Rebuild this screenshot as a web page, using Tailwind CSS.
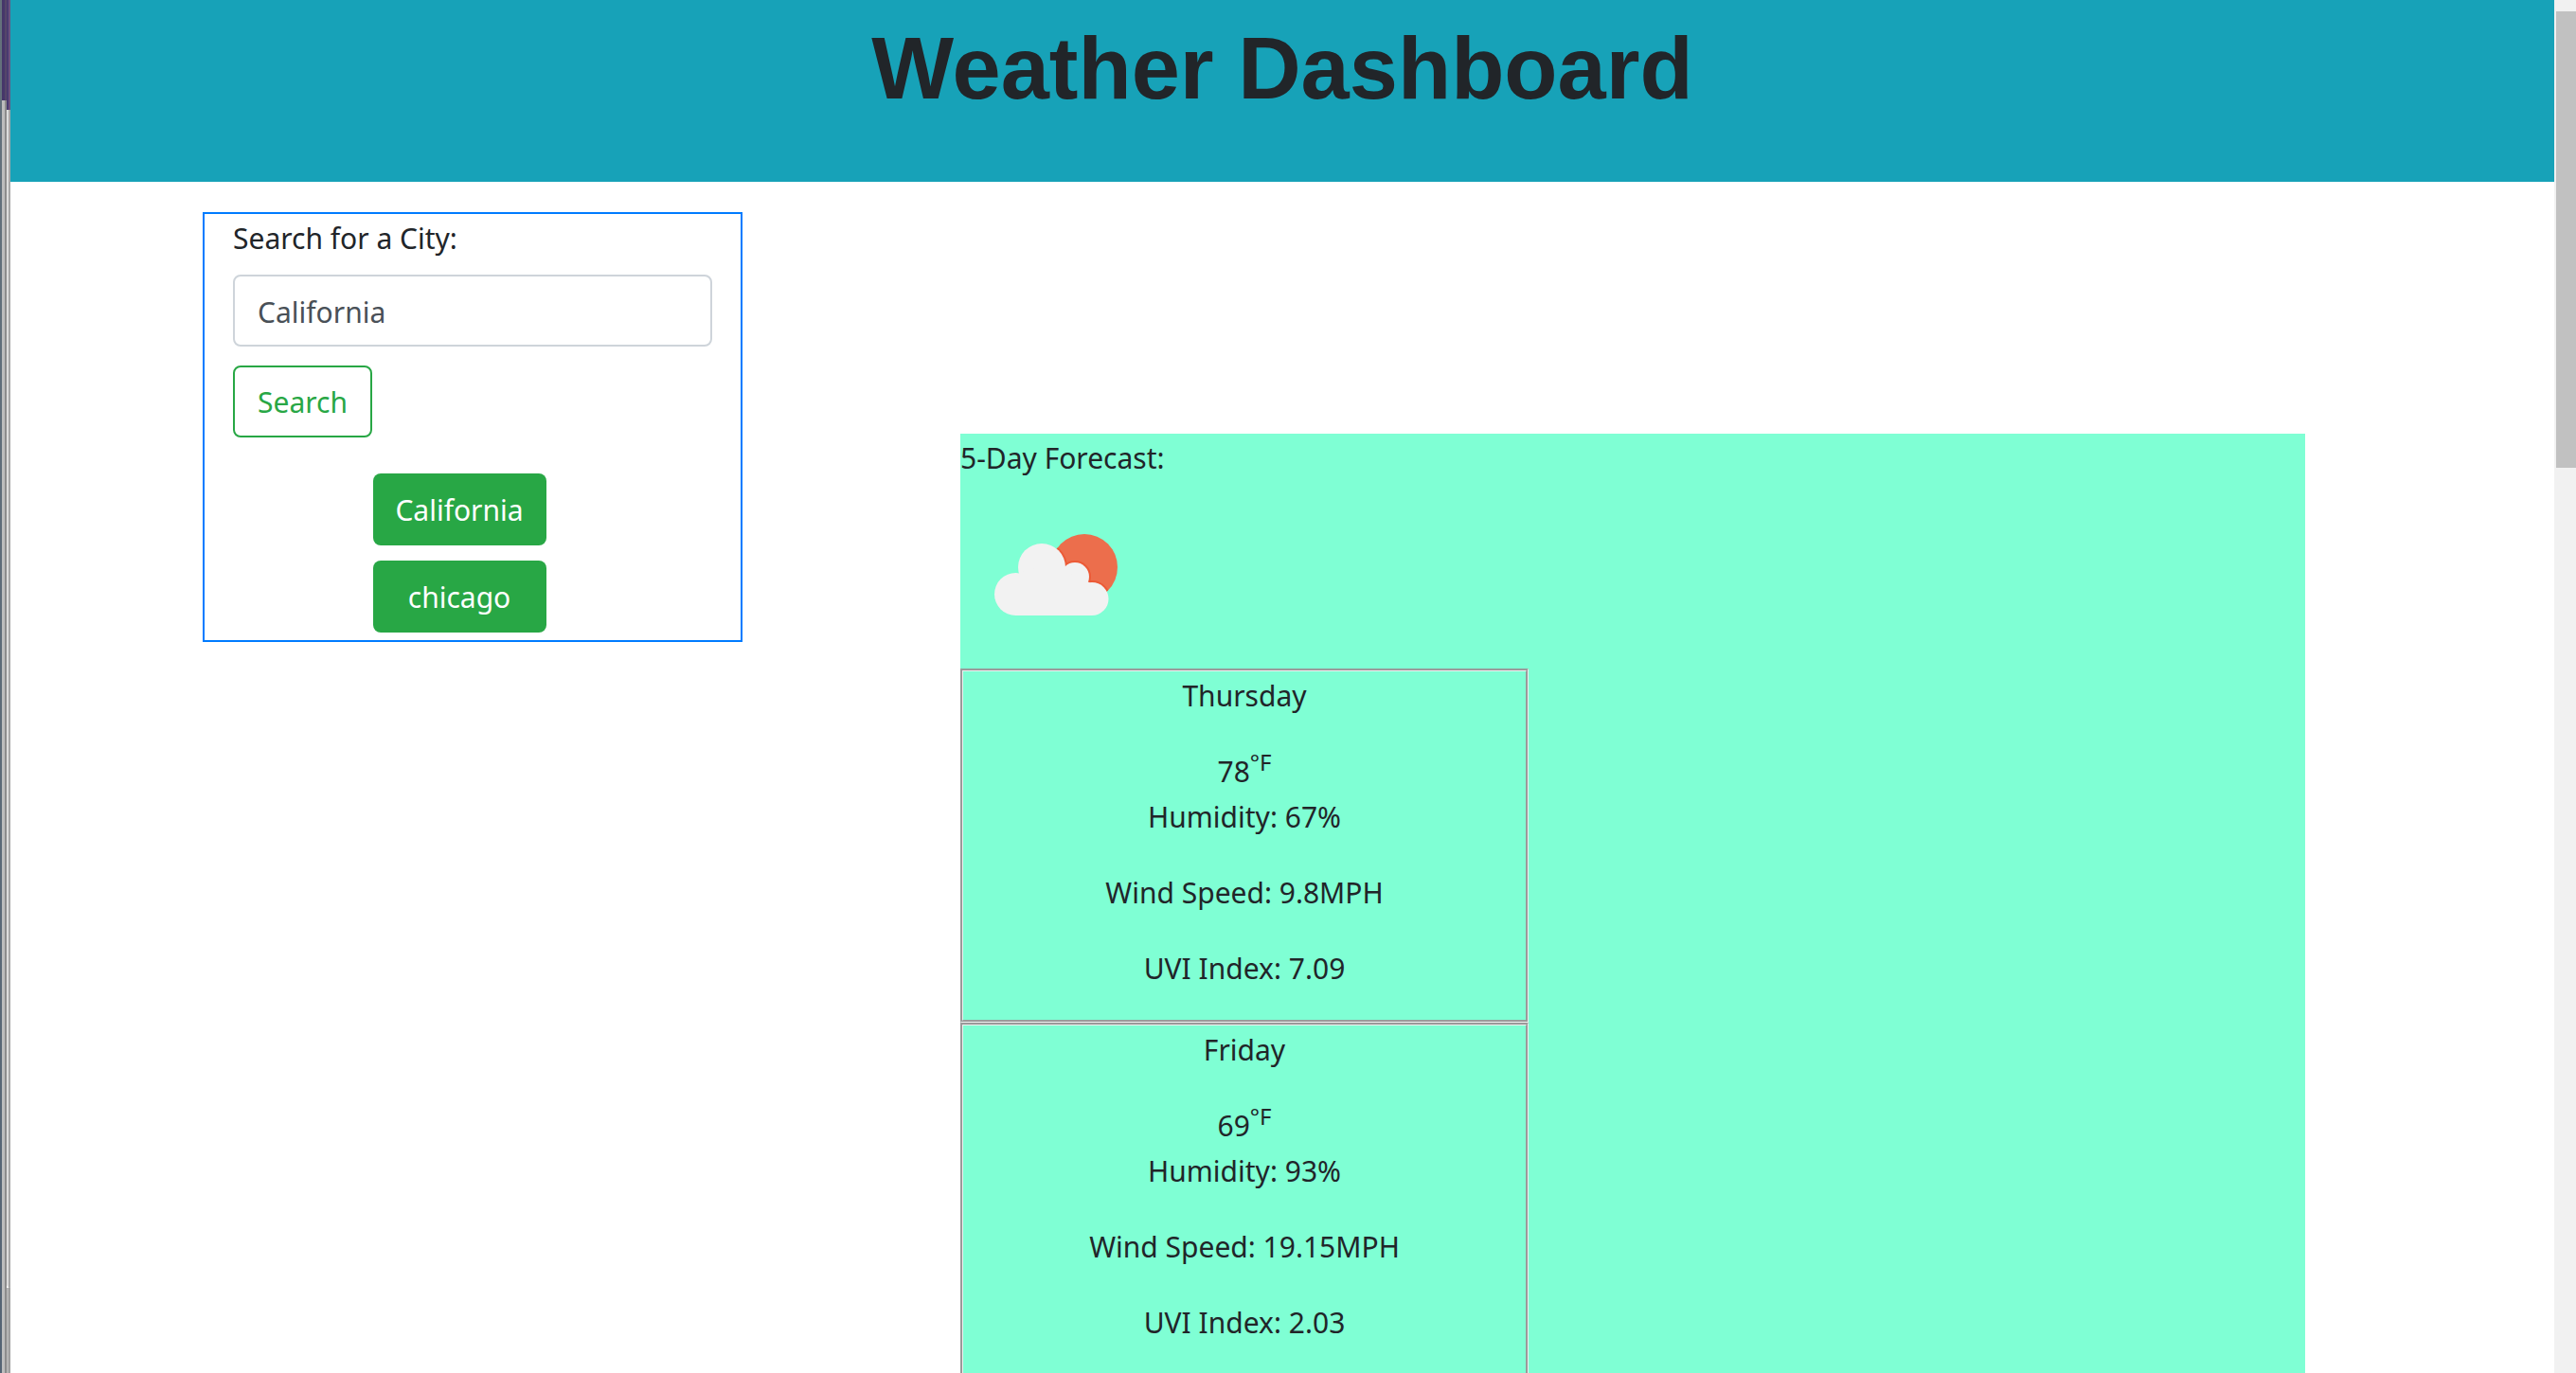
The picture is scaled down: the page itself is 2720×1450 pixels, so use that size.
<!DOCTYPE html>
<html lang="en">
<head>
<meta charset="utf-8">
<title>Weather Dashboard</title>
<script src="https://cdn.jsdelivr.net/npm/@tailwindcss/browser@4"></script>
</head>
<body class="flex h-screen overflow-hidden bg-white font-['Noto_Sans',sans-serif] text-[30px] leading-[48px] text-[#212529]">
  <!-- window edge -->
  <div class="flex w-[11px] shrink-0">
    <div class="w-[2px] bg-linear-to-b from-[#64727c] to-[#556474]"></div>
    <div class="flex w-[5px] flex-col">
      <div class="h-[106px] border-r-2 border-[#544669] bg-[#46366a]"></div>
      <div class="flex-1 border-r-2 border-[#8c8c8c] bg-[#bdbdbd]"></div>
    </div>
    <div class="flex w-[4px] flex-col">
      <div class="h-[116px] border-r-2 border-[#6a5480] bg-[#4a3a70]"></div>
      <div class="h-[1244px] rounded-bl-[4px] border-r-2 border-[#a8a8a8] bg-[#dcdcdc]"></div>
      <div class="flex-1 border-r-2 border-[#a0a0a0] bg-[#b4b4b4]"></div>
    </div>
  </div>

  <div class="min-w-0 flex-1">
    <header class="h-[192px] bg-[#17a2b8] pt-[18px] text-center">
      <h1 class="font-['Liberation_Sans',sans-serif] text-[92px] leading-[108px] font-bold">Weather Dashboard</h1>
    </header>

    <main class="mx-auto flex max-w-[2280px] items-start pt-8">
      <aside class="w-1/4 border-2 border-[#007bff] px-[30px] pt-[2px] pb-2">
        <form>
          <label for="city" class="mb-[14px] block">Search for a City:</label>
          <input id="city" type="text" value="California" class="block h-[76px] w-full rounded-lg border-2 border-[#ced4da] px-6 pt-[2px] text-[#495057]">
          <button type="button" class="mt-5 block h-[76px] rounded-lg border-2 border-[#28a745] px-6 pt-[2px] text-[#28a745]">Search</button>
        </form>
        <div class="mt-[38px] flex flex-col items-center gap-4 pr-7">
          <button type="button" class="h-[76px] w-[183px] rounded-lg bg-[#28a745] pt-[2px] text-white">California</button>
          <button type="button" class="h-[76px] w-[183px] rounded-lg bg-[#28a745] pt-[2px] text-white">chicago</button>
        </div>
      </aside>

      <section class="mt-[234px] mr-[60px] ml-[230px] flex-1 bg-[#7fffd4]">
        <h2 class="h-12 pt-[2px]">5-Day Forecast:</h2>
        <svg class="block size-[200px]" viewBox="0 0 200 200" role="img" aria-label="Partly cloudy">
          <defs>
            <clipPath id="sun"><circle cx="131" cy="93" r="35"/></clipPath>
            <g id="cloud">
              <circle cx="58.500" cy="121.500" r="22.500"/>
              <circle cx="86" cy="93" r="25"/>
              <circle cx="121" cy="103" r="15"/>
              <circle cx="139" cy="126.500" r="17.500"/>
              <path d="M58 144V105L64 98L86 93L111 98L136 109L139 112V144Z"/>
            </g>
          </defs>
          <circle cx="131" cy="93" r="35" fill="#ec6e4c"/>
          <use href="#cloud" clip-path="url(#sun)" fill="#ec5a36" stroke="#ec5a36" stroke-width="4"/>
          <use href="#cloud" fill="#f2f2f2"/>
        </svg>
        <article class="w-[600px] border-[3px] border-[#eee] pt-[2px] pb-[30px] text-center [border-style:groove]">
          <h3 class="mb-8">Thursday</h3>
          <p>78<sup class="text-[24px]">°F</sup></p>
          <p class="mb-8">Humidity: 67%</p>
          <p class="mb-8">Wind Speed: 9.8MPH</p>
          <p>UVI Index: 7.09</p>
        </article>
        <article class="w-[600px] border-[3px] border-[#eee] pt-[2px] pb-[30px] text-center [border-style:groove]">
          <h3 class="mb-8">Friday</h3>
          <p>69<sup class="text-[24px]">°F</sup></p>
          <p class="mb-8">Humidity: 93%</p>
          <p class="mb-8">Wind Speed: 19.15MPH</p>
          <p>UVI Index: 2.03</p>
        </article>
      </section>
    </main>
  </div>

  <!-- scrollbar -->
  <div class="w-[23px] shrink-0 bg-[#f1f1f1] pt-3 pl-[2px]">
    <div class="h-[482px] bg-[#c1c1c1]"></div>
  </div>
</body>
</html>
